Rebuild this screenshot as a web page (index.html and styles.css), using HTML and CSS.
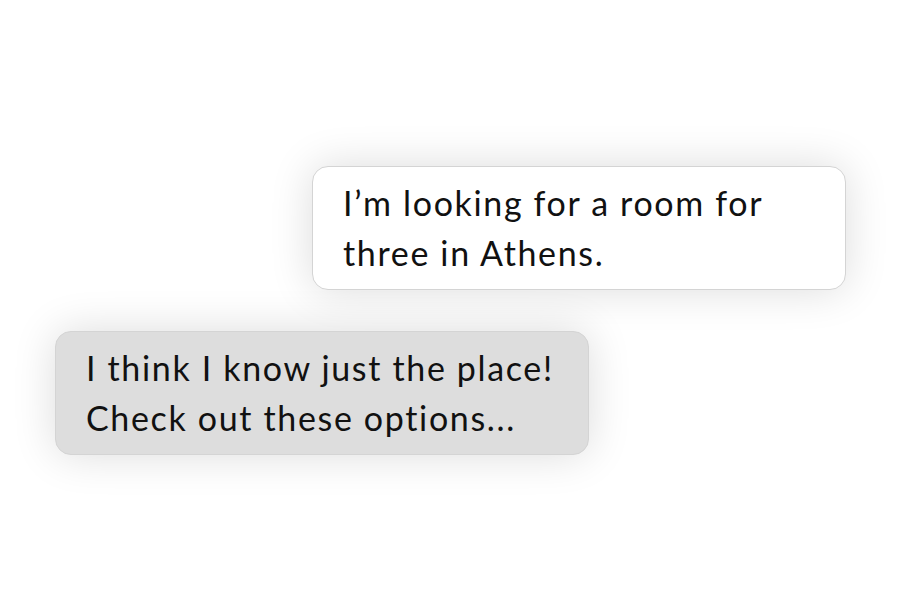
FILE: index.html
```html
<!DOCTYPE html>
<html lang="en">
  <head>
    <meta charset="UTF-8" />
    <meta name="viewport" content="width=device-width, initial-scale=1.0" />
    <title>chat</title>
    <link rel="stylesheet" href="styles.css">
  </head>
  <body>
    <div id="chat">
      <div class="bubble bubble-user">
        I’m looking for a room for<br />three in Athens.
      </div>
      <div class="bubble bubble-bot">
        I think I know just the place!<br />Check out these options...
      </div>
    </div>
  </body>
</html>
```

FILE: styles.css
```css
body {
  margin: 0;
  width: 900px;
  height: 600px;
  background: #ffffff;
  font-family: Lato, "Liberation Sans", sans-serif;
  color: #111111;
  overflow: hidden;
}

#chat {
  display: flex;
  flex-direction: column;
  gap: 41px;
  padding-top: 166px;
}

.bubble {
  box-sizing: border-box;
  width: 534px;
  height: 124px;
  padding: 11px 30px 13px;
  font-size: 34px;
  line-height: 50px;
  letter-spacing: 1.65px;
  white-space: nowrap;
  border: 1px solid #d4d4d4;
  border-radius: 16px;
  box-shadow: 0 0 44px rgba(0, 0, 0, 0.14);
}

.bubble-user {
  margin-left: 312px;
  background: #ffffff;
}

.bubble-bot {
  margin-left: 55px;
  background: #dddddd;
}
```
